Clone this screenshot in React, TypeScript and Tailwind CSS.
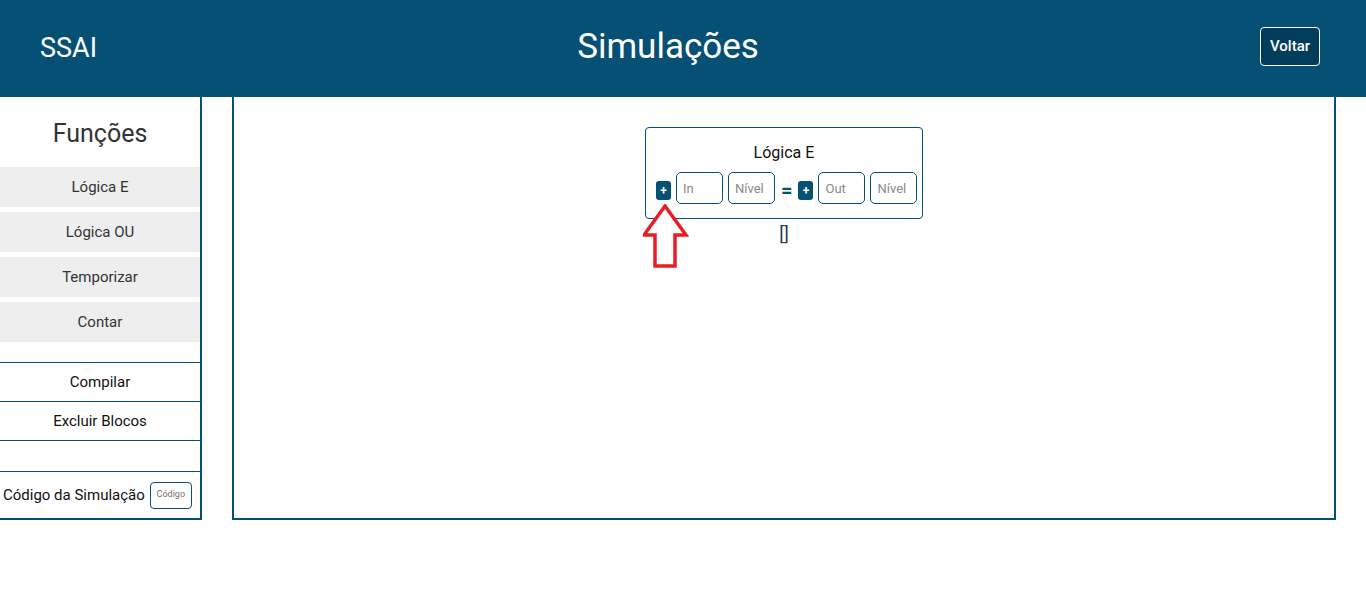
import React from "react";

const funcoes = ["Lógica E", "Lógica OU", "Temporizar", "Contar"];

function PlusButton() {
  return (
    <button className="mt-[5px] flex h-[19px] w-[15px] shrink-0 items-center justify-center rounded-[3px] bg-[#064f75] text-[12px] font-bold leading-none text-white">
      +
    </button>
  );
}

function Campo({ placeholder }: { placeholder: string }) {
  return (
    <input
      type="text"
      placeholder={placeholder}
      className="h-[32px] w-[47px] shrink-0 rounded-[5px] border border-[#064f75] bg-white px-[6px] text-[13px] text-[#333] placeholder:text-[#8a8a8a] outline-none"
    />
  );
}

function UpArrow() {
  return (
    <svg
      className="absolute left-[409px] top-[107px]"
      width="46"
      height="66"
      viewBox="0 0 46 66"
    >
      <path
        d="M22 2 L43 31 L32 31 L32 62 L12 62 L12 31 L1 31 Z"
        fill="white"
        stroke="#ec1c24"
        strokeWidth="3.5"
        strokeLinejoin="miter"
      />
    </svg>
  );
}

export default function App() {
  return (
    <div className="min-h-[598px] bg-white font-['Roboto',sans-serif]">
      <header className="relative flex h-[97px] items-center justify-between bg-[#064f75] pl-10 pr-[46px] text-white">
        <span className="text-[27px]">SSAI</span>
        <h1 className="absolute left-[668px] top-[22px] -translate-x-1/2 text-[35px] leading-[50px]">
          Simulações
        </h1>
        <button className="mb-[4px] h-[39px] w-[60px] rounded-[4px] border border-white bg-[#033d5c] text-[15px] font-medium">
          Voltar
        </button>
      </header>

      <div className="flex gap-[30px]">
        <aside className="flex h-[423px] w-[202px] flex-col border-b-2 border-r-2 border-[#064f75] text-[#333]">
          <h2 className="flex h-[70px] items-center justify-center pt-[3px] text-[25px]">Funções</h2>
          <div className="flex flex-col gap-[5px]">
            {funcoes.map((f) => (
              <div key={f} className="flex h-[40px] items-center justify-center bg-[#eeeeee] text-[15px]">
                {f}
              </div>
            ))}
          </div>
          <div className="mt-[20px] flex flex-col text-[15px] text-[#111]">
            <div className="flex h-[39px] items-center justify-center border-t border-[#064f75]">Compilar</div>
            <div className="flex h-[39px] items-center justify-center border-t border-[#064f75]">Excluir Blocos</div>
            <div className="h-[31px] border-t border-[#064f75]" />
            <div className="flex h-[47px] items-center gap-[5px] border-t border-[#064f75] pl-[3px]">
              <span>Código da Simulação</span>
              <button className="h-[27px] w-[42px] rounded-[4px] border border-[#064f75] text-[9px] text-[#7a6f6a]">
                Código
              </button>
            </div>
          </div>
        </aside>

        <main className="relative flex h-[423px] w-[1104px] flex-col items-center border-x-2 border-b-2 border-[#064f75] pt-[30px]">
          <div className="w-[278px] rounded-[4px] border border-[#064f75] pb-[14px] pl-[10px] pr-[5px] pt-[13px]">
            <div className="pr-[5px] text-center text-[16px] leading-[24px] text-[#111]">Lógica E</div>
            <div className="mt-[7px] flex items-center gap-[5px]">
              <PlusButton />
              <Campo placeholder="In" />
              <Campo placeholder="Nível" />
              <span className="mx-[1px] mt-[4px] text-[20px] font-bold leading-none text-[#064f75]">=</span>
              <PlusButton />
              <Campo placeholder="Out" />
              <Campo placeholder="Nível" />
            </div>
          </div>
          <div className="mt-[3px] text-[18px] leading-[24px] text-[#1f3a4d]">[]</div>
          <UpArrow />
        </main>
      </div>
    </div>
  );
}
